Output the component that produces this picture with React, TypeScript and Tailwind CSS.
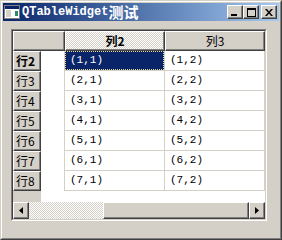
const rows = [2, 3, 4, 5, 6, 7, 8];

const raised =
  "border-t border-l border-t-white border-l-white border-r border-b border-r-[#404040] border-b-[#404040] shadow-[inset_-1px_-1px_#808080]";

const mono = "font-['Liberation_Mono','Noto_Sans_CJK_SC',monospace] text-[11px]";

const TitleButton = ({ kind }: { kind: "min" | "max" | "close" }) => (
  <div className={`w-[16px] h-[14px] bg-[#d4d0c8] ${raised} flex items-center justify-center`}>
    {kind === "min" && (
      <svg width="8" height="8" viewBox="0 0 8 8">
        <rect x="0" y="6" width="6" height="2" fill="#000" />
      </svg>
    )}
    {kind === "max" && (
      <svg width="9" height="9" viewBox="0 0 9 9">
        <rect x="0.5" y="0.5" width="8" height="8" fill="none" stroke="#000" />
        <rect x="0" y="0" width="9" height="2" fill="#000" />
      </svg>
    )}
    {kind === "close" && (
      <svg width="8" height="7" viewBox="0 0 8 7">
        <path d="M0 0h2l2 2.5L6 0h2L5 3.5 8 7H6L4 4.5 2 7H0l3-3.5z" fill="#000" />
      </svg>
    )}
  </div>
);

const AppIcon = () => (
  <svg width="16" height="16" viewBox="0 0 16 16">
    <rect x="0.5" y="1.5" width="15" height="13" fill="#fff" stroke="#808080" />
    <rect x="1" y="2" width="14" height="3" fill="#0a246a" />
    <rect x="2" y="6" width="5" height="7" fill="#d4d0c8" />
    <rect x="11" y="7" width="3" height="5" fill="#2a8a6a" />
  </svg>
);

const Arrow = ({ dir }: { dir: "left" | "right" }) => (
  <div className={`w-[16px] h-full bg-[#d4d0c8] ${raised} flex items-center justify-center`}>
    <svg width="4" height="7" viewBox="0 0 4 7">
      {dir === "left" ? <path d="M4 0v7L0 3.5z" fill="#000" /> : <path d="M0 0v7l4-3.5z" fill="#000" />}
    </svg>
  </div>
);

export default function App() {
  return (
    <div className="w-[282px] h-[240px] font-['Noto_Sans_CJK_SC',sans-serif] text-[12px] text-black">
      <div className="w-full h-full border-t border-l border-t-[#d4d0c8] border-l-[#d4d0c8] border-r border-b border-r-[#404040] border-b-[#404040]">
        <div className="w-full h-full border-t border-l border-t-white border-l-white border-r border-b border-r-[#808080] border-b-[#808080] bg-[#d4d0c8] p-px">
          {/* title bar */}
          <div className="h-[18px] flex items-center bg-gradient-to-r from-[#0a246a] to-[#a6caf0] pl-[1px] pr-[2px]">
            <AppIcon />
            <div className="ml-[2px] text-white font-bold leading-[18px] whitespace-nowrap flex items-center">
              <span className="font-['Liberation_Mono',monospace] text-[12px]">QTableWidget</span>
              <span className="text-[15px]">测试</span>
            </div>
            <div className="ml-auto flex items-center">
              <TitleButton kind="min" />
              <TitleButton kind="max" />
              <div className="w-[2px]" />
              <TitleButton kind="close" />
            </div>
          </div>

          {/* body */}
          <div className="pl-[8px] pt-[8px]">
            <div className="w-[256px] h-[192px] border-t border-l border-t-[#808080] border-l-[#808080] border-r border-b border-r-white border-b-white">
              <div className="w-full h-full border-t border-l border-t-[#404040] border-l-[#404040] border-r border-b border-r-[#d4d0c8] border-b-[#d4d0c8] bg-white flex flex-col">
                {/* header */}
                <div className="flex h-[20px] shrink-0">
                  <div className={`w-[52px] bg-[#d4d0c8] ${raised}`} />
                  <div
                    className={`w-[100px] ${raised} bg-[repeating-conic-gradient(#d4d0c8_0_25%,#ffffff_0_50%)] bg-[length:2px_2px] flex items-center justify-center font-bold`}
                  >
                    列2
                  </div>
                  <div className={`w-[100px] bg-[#d4d0c8] ${raised} flex items-center justify-center`}>列3</div>
                </div>

                {/* rows */}
                {rows.map((r, i) => (
                  <div key={r} className="flex h-[20px] shrink-0">
                    <div className={`w-[28px] bg-[#d4d0c8] ${raised} pl-[2px] flex items-center ${i === 0 ? "font-bold" : ""}`}>
                      行{r}
                    </div>
                    <div className="w-[24px] border-r border-r-[#d4d0c8]" />
                    <div className="w-[100px] border-r border-b border-[#d4d0c8] flex">
                      {i === 0 ? (
                        <div className={`flex-1 bg-[#0a246a] text-white border border-dotted border-[#e8d890] flex items-center pl-[4px] ${mono}`}>
                          (1,1)
                        </div>
                      ) : (
                        <div className={`flex-1 flex items-center pl-[5px] ${mono}`}>({i + 1},1)</div>
                      )}
                    </div>
                    <div className={`w-[100px] border-r border-b border-[#d4d0c8] flex items-center pl-[5px] ${mono}`}>
                      ({i + 1},2)
                    </div>
                  </div>
                ))}

                {/* filler */}
                <div className="flex-1 flex">
                  <div className="w-[28px] bg-[#d4d0c8]" />
                </div>

                {/* horizontal scrollbar */}
                <div className="h-[17px] shrink-0 flex">
                  <Arrow dir="left" />
                  <div className="w-[74px] bg-[repeating-conic-gradient(#d4d0c8_0_25%,#ffffff_0_50%)] bg-[length:2px_2px]" />
                  <div className={`flex-1 bg-[#d4d0c8] ${raised}`} />
                  <Arrow dir="right" />
                </div>
              </div>
            </div>
          </div>
        </div>
      </div>
    </div>
  );
}
